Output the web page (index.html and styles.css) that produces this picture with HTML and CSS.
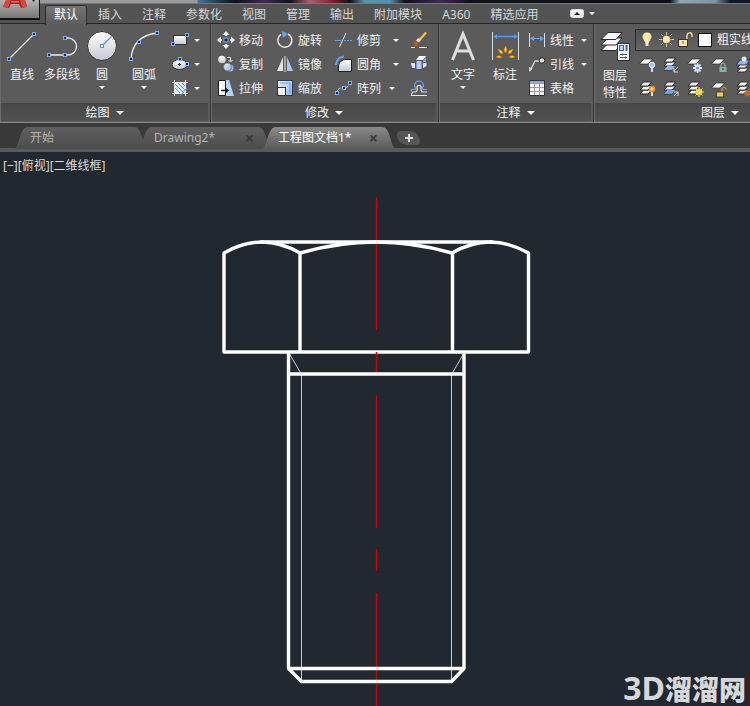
FILE: index.html
```html
<!DOCTYPE html>
<html lang="zh-CN">
<head>
<meta charset="utf-8">
<title>工程图文档1</title>
<link rel="stylesheet" href="styles.css">
</head>
<body>
<svg class="defs" aria-hidden="true">
  <defs>
    <linearGradient id="silver" x1="0" y1="0" x2="0" y2="1"><stop offset="0" stop-color="#fff"/><stop offset="1" stop-color="#c3c8d2"/></linearGradient>
    <linearGradient id="sky" x1="0" y1="0" x2="1" y2="1"><stop offset="0" stop-color="#e8f1ff"/><stop offset="1" stop-color="#8fb6ec"/></linearGradient>
    <symbol id="grip" viewBox="0 0 4 4"><rect x=".5" y=".5" width="3" height="3" fill="#1f2b45" stroke="#7db0ff"/></symbol>
    <symbol id="stack" viewBox="0 0 14 14"><g fill="#f4f4f4" stroke="#2a2a2a" stroke-width="1"><path d="M4.500 9h8L9 13H1z"/><path d="M4.500 5h8L9 9H1z"/><path d="M4.500 1h8L9 5H1z"/></g></symbol>
    <symbol id="sheet" viewBox="0 0 14 8"><path d="M5 1h8.500L9 6H.5z" fill="#f4f4f4" stroke="#2a2a2a" stroke-width=".7"/></symbol>
    <symbol id="sun" viewBox="0 0 16 16"><path d="M8 0v16M0 8h16M2.500 2.500l11 11M13.500 2.500l-11 11" stroke="#d8d2b0" stroke-width="1"/><circle cx="8" cy="8" r="4.500" fill="#ffe9a6" stroke="#5b5b5b"/></symbol>
  </defs>
</svg>

<header class="top">
  <div class="titlebar"></div>
  <button class="app" aria-label="应用程序菜单">
    <svg width="38" height="17" viewBox="0 0 38 17"><path d="M6 0h19l2 7-6 1-2-4h-8L9 8 3 7z" fill="#a8221f"/><path d="M6 0h5L8 7.500 3 7zM20 0h5l2 7-5 .5z" fill="#cf4a42"/><path d="M11 1h8v1.500h-8z" fill="#e0716a"/><path d="M32 0h3l-1.500 2z" fill="#222"/></svg>
  </button>
  <nav class="tabs">
    <a class="tab on" href="#">默认</a><a class="tab" href="#">插入</a><a class="tab" href="#">注释</a><a class="tab" href="#">参数化</a><a class="tab" href="#">视图</a><a class="tab" href="#">管理</a><a class="tab" href="#">输出</a><a class="tab" href="#">附加模块</a><a class="tab" href="#">A360</a><a class="tab" href="#">精选应用</a>
    <button class="mini" aria-label="最小化功能区"><svg width="14" height="9" viewBox="0 0 14 9"><rect x=".5" y=".5" width="13" height="8" rx="2" fill="#f0f0f0" stroke="#ddd"/><path d="M4 6l3-3 3 3z" fill="#222"/></svg><i class="arrow"></i></button>
  </nav>
</header>

<section class="ribbon">
  <section class="panel draw">
    <div class="body">
      <button class="big"><svg width="32" height="32"><path d="M3 29L28 4" stroke="#eee" stroke-width="1.300"/><use href="#grip" x="1" y="27" width="4" height="4"/><use href="#grip" x="26" y="2" width="4" height="4"/></svg><span>直线</span></button>
      <button class="big"><svg width="32" height="32"><path d="M3 25H22a8.500 8.500 0 0 0 0-17H19" fill="none" stroke="#eee" stroke-width="1.300"/><use href="#grip" x="1" y="23" width="4" height="4"/><use href="#grip" x="17" y="23" width="4" height="4"/><use href="#grip" x="17" y="6" width="4" height="4"/></svg><span>多段线</span></button>
      <button class="big"><svg width="32" height="32"><circle cx="16" cy="16" r="14.500" fill="url(#silver)" stroke="#333"/><path d="M16 16L26 6" stroke="#5a97f0" stroke-width="1.200"/><rect x="14.500" y="14.500" width="3" height="3" fill="#fff" stroke="#5a97f0"/></svg><span>圆</span><i class="arrow"></i></button>
      <button class="big arc"><svg width="32" height="32"><path d="M3 29C4 14 13 5 29 3" fill="none" stroke="#eee" stroke-width="1.300"/><use href="#grip" x="1" y="27" width="4" height="4"/><use href="#grip" x="9" y="10" width="4" height="4"/><use href="#grip" x="27" y="1" width="4" height="4"/></svg><span>圆弧</span><i class="arrow"></i></button>
      <div class="col">
        <button class="row" aria-label="矩形"><svg width="18" height="18"><rect x="2.500" y="4.500" width="13" height="9" fill="url(#silver)" stroke="#333"/><use href="#grip" x="14" y="2" width="4" height="4"/><use href="#grip" x="0" y="11" width="4" height="4"/></svg><i class="arrow"></i></button>
        <button class="row" aria-label="椭圆"><svg width="18" height="18"><ellipse cx="8.500" cy="9.500" rx="7.500" ry="5" fill="url(#silver)" stroke="#333"/><path d="M8.500 8v3M7 9.500h3" stroke="#222"/><use href="#grip" x="7" y="2" width="4" height="4"/><use href="#grip" x="14" y="7" width="4" height="4"/></svg><i class="arrow"></i></button>
        <button class="row" aria-label="图案填充"><svg width="18" height="18"><rect x="4" y="4" width="10" height="10" fill="#dfe9fa"/><path d="M4 5l9 9M4 9l5 5M7 4l7 7M11 4l3 3" stroke="#5a8de0"/><path d="M3.500 1v16M14.500 1v16M1 3.500h16M1 14.500h16" stroke="#eee"/><path d="M9 17l7-8" stroke="#5a97f0"/></svg><i class="arrow"></i></button>
      </div>
    </div>
    <h2>绘图<i class="arrow lg"></i></h2>
  </section>

  <section class="panel modify">
    <div class="body">
      <div class="col">
        <button class="row"><svg width="18" height="18"><path d="M9 0l3.500 4h-7zM9 18l3.500-4h-7zM0 9l4-3.500v7zM18 9l-4-3.500v7z" fill="#eee"/><path d="M9 3v2M9 13v2M3 9h2M13 9h2" stroke="#eee" stroke-width="2"/><rect x="7" y="7" width="4" height="4" fill="#223" stroke="#7db0ff"/></svg><span>移动</span></button>
        <button class="row"><svg width="18" height="18"><circle cx="5" cy="4.500" r="3.800" fill="url(#silver)"/><circle cx="13" cy="13" r="3.600" fill="#8fb6ec"/><circle cx="10.500" cy="12" r="4" fill="url(#sky)" stroke="#444" stroke-width=".5"/><path d="M10 2.500h3.500V6M11.500 5l2 2 2-2" fill="none" stroke="#eee"/></svg><span>复制</span></button>
        <button class="row"><svg width="18" height="18"><path d="M1.500 1.500h7v15h-7z" fill="#fff" stroke="#222"/><path d="M9 1h3l5 16H9z" fill="#b4d2f7"/><path d="M4 11.500h6" stroke="#111" stroke-width="1.500"/><path d="M8.500 8.500l3.500 3-3.500 3z" fill="#111"/></svg><span>拉伸</span></button>
      </div>
      <div class="col">
        <button class="row"><svg width="18" height="18"><path d="M12 3a7 7 0 1 1-7 .4" fill="none" stroke="#e6e6e6" stroke-width="1.600"/><path d="M6 0l6 3-5 4z" fill="#6aa2f5"/></svg><span>旋转</span></button>
        <button class="row"><svg width="18" height="18"><path d="M7 2v14H1z" fill="#dfe2e8"/><path d="M11 2v14h6z" fill="#a9c8f2"/><path d="M9 1v16" stroke="#eee"/></svg><span>镜像</span></button>
        <button class="row"><svg width="18" height="18"><rect x="1.500" y="1.500" width="15" height="15" fill="url(#sky)" stroke="#2b3a58"/><path d="M4 4h10v10" fill="none" stroke="#6c9ae0"/><rect x="1.500" y="8.500" width="8" height="8" fill="#f6f6f6" stroke="#333"/></svg><span>缩放</span></button>
      </div>
      <div class="col trim">
        <button class="row"><svg width="18" height="18"><path d="M0 9.500h6" stroke="#6aa2f5"/><path d="M9 9.500h8" stroke="#6aa2f5" stroke-dasharray="2 1"/><path d="M4.500 16L11 2" stroke="#e6e6e6"/></svg><span>修剪</span><i class="arrow"></i></button>
        <button class="row"><svg width="18" height="18"><path d="M3.500 16.500V11C4 7 7 4.500 11 4.500h5.500v12z" fill="url(#silver)" stroke="#222"/><path d="M1 10C1.500 5 4.500 2 9 1.500" fill="none" stroke="#6aa2f5" stroke-width="2"/></svg><span>圆角</span><i class="arrow"></i></button>
        <button class="row near"><svg width="18" height="18"><path d="M2 14C2 9 5 9 8 9s6-1 7-6" fill="none" stroke="#ddd" stroke-dasharray="3 1"/><use href="#grip" x="0" y="12" width="4" height="4"/><use href="#grip" x="7" y="7" width="4" height="4"/><use href="#grip" x="13" y="2" width="4" height="4"/></svg><span>阵列</span><i class="arrow"></i></button>
      </div>
      <div class="col last">
        <button class="row" aria-label="删除"><svg width="18" height="18"><path d="M16 1.500L9.500 9" stroke="#f3b63e" stroke-width="2.500"/><path d="M9.500 8L7.500 10.500" stroke="#eee" stroke-width="3.500"/><path d="M4 11l2-1 2.500 2-1 2.500-3 1z" fill="#d95316"/><path d="M1 16.500h4M9 16.500h8" stroke="#eee"/></svg></button>
        <button class="row" aria-label="分解"><svg width="18" height="18"><path d="M6 5l3-4h7l-3 4z" fill="#fff"/><path d="M6 5.500h6v9H6z" fill="#b3cef4" stroke="#445" stroke-width=".8"/><path d="M13 6l3-4v6l-3 3z" fill="#83a9df"/><path d="M.5 7.500h5v6H1.500z" fill="#dce7f7" stroke="#445" stroke-width=".8"/><path d="M12 8l5-1v4l-4 3z" fill="#cfe0f9" stroke="#445" stroke-width=".8"/></svg></button>
        <button class="row" aria-label="偏移"><svg width="18" height="18"><path d="M1.500 13v-2.500h3.500c1-1 0-2-.5-4a4.500 4.500 0 0 1 9 0c-.5 2-1.500 3-.5 4H17" fill="none" stroke="#6aa2f5" stroke-width="1.200"/><path d="M17 16.500H1.500c0-2 .5-3.500 2-3.500h2c2-1 2-3 1.500-5a2.200 2.200 0 0 1 4.200 0c-.7 2-.2 5 1.800 5h4" fill="none" stroke="#e6e6e6" stroke-width="1.200"/></svg></button>
      </div>
    </div>
    <h2>修改<i class="arrow lg"></i></h2>
  </section>

  <section class="panel annotate">
    <div class="body">
      <button class="big"><svg width="32" height="32"><path d="M5.500 30L16 4l10.500 26M9.500 21h13" fill="none" stroke="#dedede" stroke-width="3"/></svg><span>文字</span><i class="arrow"></i></button>
      <button class="big dim"><svg width="32" height="32"><path d="M3.500 2v28M29.500 2v28" stroke="#ddd"/><path d="M6 6.500h21" stroke="#5a97f0" stroke-width="1.500"/><path d="M4 6.500l4-2.500v5zM29 6.500l-4-2.500v5z" fill="#5a97f0"/><g fill="#ffe030" stroke="#d9760a" stroke-width=".7"><path d="M16.500 16l1.500 4-1.500 3-1.500-3zM9 19l4 2 1 3-3-1zM24 19l-4 2-1 3 3-1zM7 27l3-1.500 3 1.500-3 1zM26 27l-3-1.500-3 1.500 3 1z"/></g></svg><span>标注</span></button>
      <div class="col">
        <button class="row"><svg width="18" height="18"><path d="M1.500 2v14M16.500 2v14" stroke="#ddd"/><path d="M4 7.500h10" stroke="#6aa2f5"/><path d="M2 7.500l4-2.500v5zM16 7.500l-4-2.500v5z" fill="#6aa2f5"/></svg><span>线性</span><i class="arrow"></i></button>
        <button class="row"><svg width="18" height="18"><path d="M2 16L7 6h5" fill="none" stroke="#ddd" stroke-width="1.300"/><path d="M1 17v-5l3.500 1.500z" fill="#ddd"/><circle cx="14" cy="5.500" r="2.800" fill="#ddd" stroke="#222"/></svg><span>引线</span><i class="arrow"></i></button>
        <button class="row"><svg width="18" height="18"><path d="M1.500 1.500h15v15h-15z" fill="#f2f2f2" stroke="#333"/><path d="M2 2h14v3H2z" fill="#8fa5c8"/><path d="M2 8.500h14M2 12.500h14M6.500 5v11M11.500 5v11" stroke="#999"/></svg><span>表格</span></button>
      </div>
    </div>
    <h2>注释<i class="arrow lg"></i></h2>
  </section>

  <section class="panel layers">
    <div class="body">
      <button class="big two"><svg width="32" height="32"><g fill="#f6f6f6" stroke="#2a2a2a"><path d="M9 13.500h14l-6 7H2z"/><path d="M9 8h14l-6 7H2z"/><path d="M9 2.500h14l-6 7H2z"/></g><rect x="18.500" y="13.500" width="12" height="17" fill="#f4f6fa" stroke="#333"/><rect x="20.500" y="15.500" width="4" height="5" fill="#bcd3f5" stroke="#3d66a8"/><path d="M27.500 15v6" stroke="#3d66a8" stroke-width="2"/><path d="M21 24.500h7M21 27.500h7M23.500 23.500v2M26.500 26.500v2" stroke="#555"/></svg><span>图层<br>特性</span></button>
      <div class="stackcol">
        <div class="layerpick">
          <svg width="72" height="20" viewBox="0 0 72 20"><path d="M11 2.500c-3 0-4.500 2-4.500 4.500 0 2 2.500 4 2.800 6h3.400c.3-2 2.800-4 2.800-6 0-2.500-1.500-4.500-4.500-4.500z" fill="#ffeaa8"/><path d="M11 13v3" stroke="#eee" stroke-width="3"/><use href="#sun" x="23" y="2" width="15" height="15"/><path d="M50 10V7c0-4 5-4 5-1v2" transform="translate(1 -1)" fill="none" stroke="#ead98c" stroke-width="1.500"/><rect x="42.500" y="9.500" width="9" height="7" fill="#ffe9a0" stroke="#333"/><path d="M47 11v3" stroke="#555"/></svg>
          <i class="swatch"></i>
          <select aria-label="图层"><option>粗实线</option></select>
        </div>
        <div class="grid">
          <button aria-label="关闭图层"><svg width="18" height="18"><use href="#sheet" x="0" y="2" width="14" height="8"/><circle cx="13" cy="9" r="2.700" fill="#9cc4ff" stroke="#e8f1ff"/><path d="M13 12v4" stroke="#ddd" stroke-width="2"/></svg></button>
          <button aria-label="隔离"><svg width="18" height="18"><use href="#stack" x="0" y="1" width="14" height="14"/><path d="M4.500 10h8L9 14H1z" fill="#8fb6ec"/><path d="M15 11l-4 4M11 12v4h4" fill="none" stroke="#ddd"/></svg></button>
          <button aria-label="冻结"><svg width="18" height="18"><use href="#sheet" x="0" y="2" width="14" height="8"/><path d="M10.500 7v10M6 12h9M7.500 8.500l6 7M13.500 8.500l-6 7" stroke="#e2efff" stroke-width="1.800"/><circle cx="10.500" cy="12" r="1.500" fill="#5b8fd8"/></svg></button>
          <button aria-label="锁定"><svg width="18" height="18"><use href="#sheet" x="0" y="2" width="14" height="8"/><path d="M10 11V9a2 2 0 0 1 4 0v2" fill="none" stroke="#a3bfb8"/><rect x="8.500" y="11" width="7" height="5" fill="#8cb4a8"/><path d="M12 12v2" stroke="#333"/></svg></button>
          <button aria-label="置为当前"><svg width="18" height="18"><use href="#stack" x="1" y="3" width="14" height="14"/><path d="M5 4h10l-4 5H1z" fill="#8fb6ec" stroke="#335"/><circle cx="9" cy="3" r="2.500" fill="#eee"/></svg></button>
          <button aria-label="打开所有图层"><svg width="18" height="18"><use href="#stack" x="0" y="1" width="14" height="14"/><circle cx="13" cy="9" r="2.500" fill="#ffe23a" stroke="#f08a20" stroke-width="1.500"/><path d="M13 12v4" stroke="#ddd" stroke-width="2"/></svg></button>
          <button aria-label="取消隔离"><svg width="18" height="18"><use href="#stack" x="0" y="1" width="14" height="14"/><path d="M4.500 10h8L9 14H1z" fill="#6e9fe8"/><path d="M11 16l4-4M11 12h4v4" fill="none" stroke="#ddd"/></svg></button>
          <button aria-label="解冻"><svg width="18" height="18"><use href="#stack" x="0" y="1" width="14" height="14"/><path d="M12 7v10M7 12h10M8.500 8.500l7 7M15.500 8.500l-7 7" stroke="#ffe67a"/><circle cx="12" cy="12" r="3.200" fill="#ffd93a"/></svg></button>
          <button aria-label="解锁"><svg width="18" height="18"><use href="#sheet" x="0" y="2" width="14" height="8"/><path d="M11 12V9.500c0-3 4-3 4 0" fill="none" stroke="#f2c230"/><rect x="5.500" y="12" width="7" height="5" fill="#f7cf3e" stroke="#443"/></svg></button>
          <button aria-label="匹配"><svg width="18" height="18"><use href="#stack" x="1" y="1" width="14" height="14"/><path d="M8 13l6-4 4 4-6 4z" fill="#c4691c"/></svg></button>
        </div>
      </div>
    </div>
    <h2>图层<i class="arrow lg"></i></h2>
  </section>
</section>

<nav class="files">
  <a class="file" href="#"><span>开始</span></a>
  <a class="file" href="#"><span>Drawing2*</span><b>×</b></a>
  <a class="file on" href="#"><span>工程图文档1*</span><b>×</b></a>
  <button class="add" aria-label="新建"><svg width="10" height="10"><path d="M5 1v8M1 5h8" stroke="#ddd" stroke-width="2"/></svg></button>
</nav>

<main class="canvas">
  <p class="view">[−][俯视][二维线框]</p>
  <svg class="bolt" viewBox="0 0 750 554" preserveAspectRatio="xMidYMin meet" role="img" aria-label="六角螺栓">
    <path d="M376.500 45.500V178M376.500 200v20M376.500 243.500V376M376.500 397v22M376.500 441v113" stroke="#c8040a" stroke-width="1.400"/>
    <path d="M289 201l12.500 21.500V529M464 201l-12.500 21.500V529" fill="none" stroke="#c9ccd0" stroke-width="1"/>
    <g fill="none" stroke="#fff" stroke-width="3.400" stroke-linejoin="round" stroke-linecap="round">
      <path d="M261 90H492"/>
      <path d="M224 200V101Q262 79 300 101Q376 79 452 101Q490 79 528.500 101V200Z"/>
      <path d="M300 101V199M452.500 101V199"/>
      <path d="M288.500 201V516.500L301.500 529.500H451.500L464 516.500V201M288.500 222H464M288.500 516.500H464"/>
    </g>
    <path d="M376.500 200v20" stroke="#c8040a" stroke-width="1.400"/>
  </svg>
  <p class="mark"><span>3D</span>溜溜网</p>
</main>
</body>
</html>
```

FILE: styles.css
```css
* { box-sizing: border-box; }
body {
  margin: 0;
  min-height: 100vh;
  display: flex;
  flex-direction: column;
  overflow-x: hidden;
  background: #3b3b3b;
  color: #f2f2f2;
  font: 12px/16px "Noto Sans", "Noto Sans CJK SC", sans-serif;
}
button { padding: 0; border: 0; background: none; color: inherit; font: inherit; }
a { color: inherit; text-decoration: none; }
h2, p { margin: 0; font-weight: normal; }
svg { display: block; flex: none; }
.defs { position: absolute; width: 0; height: 0; }

.arrow {
  flex: none;
  width: 0;
  border: 3px solid transparent;
  border-top-color: #fff;
  border-bottom: 0;
}
.arrow.lg { border-width: 4px 4px 0; }

.top { position: relative; background: #535353; }
.titlebar {
  height: 3px;
  background: linear-gradient(90deg, #9a9a9a 197px, #3a7a9a 198px, #14283a 225px, #101018 235px, #40285a 265px, #101018 290px, #a86070 310px, #7a1828 335px, #101018 350px, #6090a8 365px, #5090b8 390px, #101018 405px, #40285a 440px, #101018 470px, #0d1018 670px, #90a8b0 680px, #8094a8 715px, #101828 730px);
}
.app {
  position: absolute;
  left: 0;
  top: 0;
  display: flex;
  width: 40px;
  height: 20px;
  overflow: hidden;
  background: linear-gradient(#b4b4b4, #757575);
  border: solid #111;
  border-width: 0 1px 2px 0;
}
.tabs {
  display: flex;
  height: 21px;
  padding: 2px 0 0 44px;
  border-top: 1px solid #777;
  border-bottom: 1px solid #262626;
  color: #d6d6d6;
  white-space: nowrap;
}
.tab { padding: 1px 10px; }
.tab.on {
  height: 19px;
  margin: 0 2px;
  padding: 1px 8px;
  background: linear-gradient(#757575, #5c5c5c);
  border-radius: 2px 2px 0 0;
  box-shadow: 0 0 0 1px #2c2c2c;
  clip-path: inset(-1px -1px 0 -1px);
  color: #fff;
}
.mini { display: flex; align-items: center; gap: 5px; margin: 0 0 2px 22px; }

.ribbon { display: flex; overflow: hidden; background: #5b5b5b; }
.panel { flex: none; padding: 4px 2px 1px 1px; border-right: 1px solid #333; box-shadow: inset 1px 0 #6c6c6c; }
.body { display: flex; height: 75px; padding-left: 1px; }
.panel h2 {
  display: flex;
  align-items: center;
  justify-content: center;
  gap: 6px;
  height: 18px;
  padding-top: 1px;
  background: linear-gradient(#474747, #515151);
  font-size: 12px;
}
.draw { width: 211px; }
.modify { width: 228px; }
.annotate { width: 155px; }
.layers { width: 254px; }
.big {
  display: flex;
  flex: none;
  flex-direction: column;
  align-items: center;
  width: 40px;
  padding-top: 2px;
}
.big span { margin: 5px 0 3px; white-space: nowrap; }
.arc { width: 44px; margin-right: 5px; }
.col { flex: none; }
.row { display: flex; align-items: center; gap: 4px; height: 24px; white-space: nowrap; }
.row span { padding-top: 1px; }
.row .arrow { margin-left: 1px; }
.modify .body { padding-left: 5px; }
.modify .col { width: 59px; }
.modify .trim { width: 75px; }
.modify .last { width: 18px; }
.trim .row .arrow { margin-left: 8px; }
.trim .near .arrow { margin-left: 4px; }
.annotate .body { padding-left: 4px; }
.annotate .big { width: 38px; }
.annotate .dim { width: 46px; }
.annotate .row .arrow { margin-left: 3px; }
.layers .body { padding-left: 0; }
.two { width: 40px; }
.two span { line-height: 17px; }
.stackcol { flex: 1; }
.layerpick {
  display: flex;
  align-items: center;
  height: 22px;
  margin-top: 1px;
  border: 1px solid #2c2c2c;
  background: linear-gradient(#505050, #656565);
}
.swatch { flex: none; width: 14px; height: 14px; margin-left: -10px; margin-right: 5px; background: #fff; border: 1px solid #111; }
.layerpick select { flex: 1; padding: 0; border: 0; background: none; color: inherit; font: inherit; appearance: none; }
.grid { display: grid; grid-template-columns: repeat(5, 24px); grid-auto-rows: 24px; padding: 2px 0 0 4px; }

.files {
  display: flex;
  height: 30px;
  padding: 4px 0 0 14px;
  border-top: 1px solid #8a8a8a;
  border-bottom: 4px solid #5a5a5a;
  background: #393939;
}
.file {
  display: flex;
  align-items: center;
  justify-content: space-between;
  width: 134px;
  height: 22px;
  margin-right: -10px;
  padding: 0 18px 0 16px;
  background: linear-gradient(#606060, #4c4c4c);
  clip-path: path("M0 22C6 20 5 0 14 0H120C129 0 128 20 134 22Z");
  color: #b4b4b4;
  white-space: nowrap;
}
.file.on { z-index: 1; background: linear-gradient(#8a8a8a, #5a5a5a); color: #fff; }
.file b { color: #3a3a3a; font-size: 16px; }
.add {
  display: flex;
  align-items: center;
  justify-content: center;
  width: 23px;
  height: 14px;
  margin: 4px 0 0 11px;
  border-radius: 4px 10px 4px 10px;
  background: #555;
}

.canvas { position: relative; flex: 1; background: #212830; }
.view { position: absolute; left: 3px; top: 6px; color: #dcdcdc; }
.bolt { width: 100%; }
.mark {
  position: absolute;
  right: 4px;
  bottom: 0;
  color: #d6d7d9;
  font: 900 27px/32px "Noto Sans", "Noto Sans CJK SC", sans-serif;
}
.mark span { font-size: 32px; font-weight: 700; }
```
